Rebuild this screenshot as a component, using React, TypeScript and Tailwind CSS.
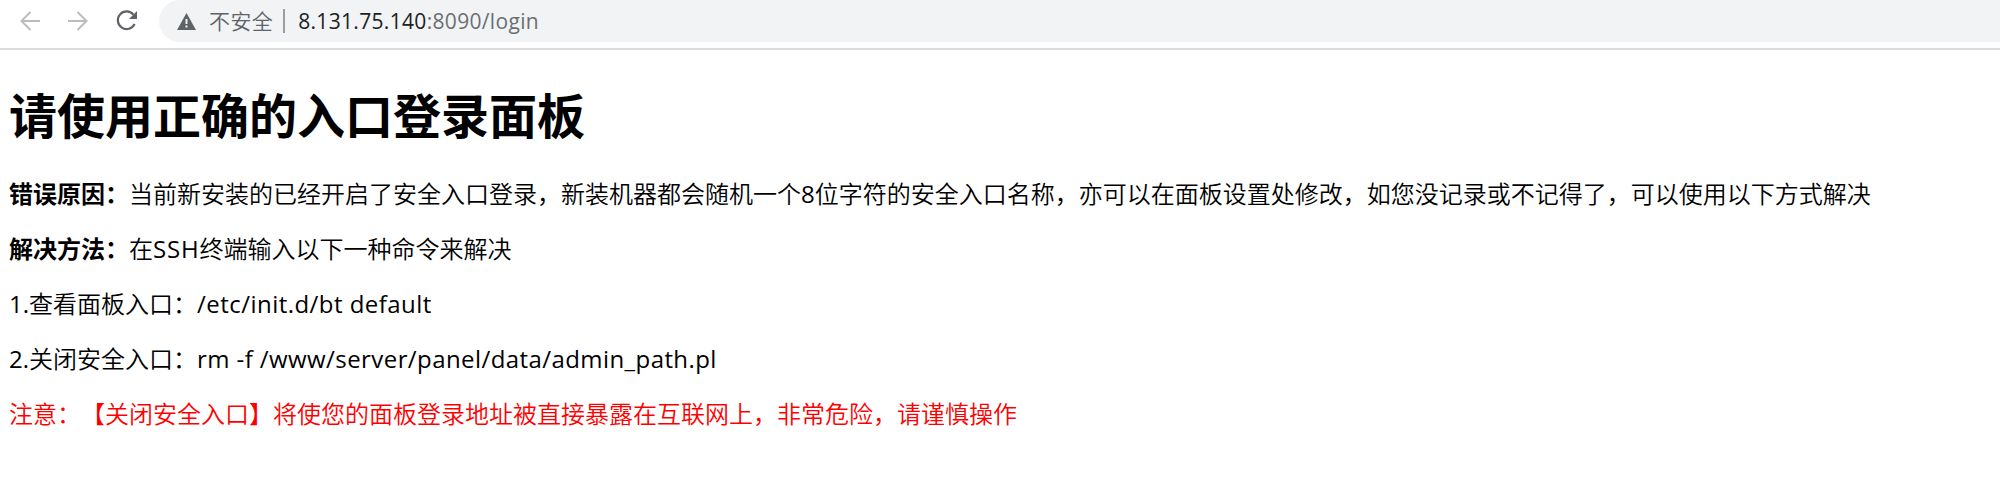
import type { ReactNode } from "react";

function Latin({ children, className = "tracking-[0.42px]" }: { children: ReactNode; className?: string }) {
  return <span className={`font-['Open_Sans','Noto_Sans',sans-serif] font-normal ${className}`}>{children}</span>;
}

function Toolbar() {
  return (
    <header className="flex h-[50px] items-start border-b-2 border-[#dcdcdc] bg-white">
      <div className="flex h-[42px] w-[159px] shrink-0 items-center pl-5">
        <svg className="h-5 w-5 text-[#babcbe]" viewBox="0 0 20 20" fill="none" stroke="currentColor" strokeWidth="2">
          <path d="M20 10H2M10.5 1l-9 9 9 9" />
        </svg>
        <svg className="ml-7 h-5 w-5 text-[#babcbe]" viewBox="0 0 20 20" fill="none" stroke="currentColor" strokeWidth="2">
          <path d="M0 10h18M9.5 1l9 9-9 9" />
        </svg>
        <svg className="ml-7 h-[22px] w-[22px] text-[#5f6368]" viewBox="0 0 22 22" fill="none">
          <path d="M17.4 4.6A8.8 8.8 0 1 0 18.6 14" stroke="currentColor" strokeWidth="2.2" />
          <path d="M21 1v8h-8z" fill="currentColor" />
        </svg>
      </div>
      <div className="flex h-[42px] flex-1 items-center rounded-l-full bg-[#f1f3f4] pl-[18px]">
        <svg className="h-[17px] w-[19px]" viewBox="0 0 19 17">
          <path d="M9.5 0L19 17H0z" fill="#5f6368" />
          <path d="M8.5 6h2v5h-2zM8.5 12.5h2v2h-2z" fill="#f1f3f4" />
        </svg>
        <span className="ml-[13px] -mt-px text-[21px] leading-none font-[350] tracking-[0.4px] text-[#5f6368]">不安全</span>
        <span className="ml-[10px] h-6 w-[2px] bg-[#9a9da1]" />
        <Latin className="ml-[13px] text-[21px] leading-none tracking-[0.32px] text-[#202124]">
          8.131.75.140<span className="text-[#6b6f73]">:8090/login</span>
        </Latin>
      </div>
    </header>
  );
}

export default function App() {
  return (
    <div className="h-[487px] w-full overflow-hidden bg-white font-['Noto_Sans_CJK_SC',sans-serif] text-black [text-spacing-trim:space-all]" lang="zh-CN">
      <Toolbar />
      <main className="flex flex-col whitespace-nowrap pl-[9px] text-2xl">
        <h1 className="mt-[31px] h-16 text-[48px] leading-[64px] font-bold">请使用正确的入口登录面板</h1>
        <div className="mt-[32px] flex flex-col gap-[23px] leading-8 font-[350]">
          <p className="h-8">
            <b className="font-bold">错误原因：</b>当前新安装的已经开启了安全入口登录，新装机器都会随机一个<Latin className="">8</Latin>位字符的安全入口名称，亦可以在面板设置处修改，如您没记录或不记得了，可以使用以下方式解决
          </p>
          <p className="h-8">
            <b className="font-bold">解决方法：</b>在<Latin className="tracking-[0.8px]">SSH</Latin>终端输入以下一种命令来解决
          </p>
          <p className="h-8"><Latin className="">1.</Latin>查看面板入口：<Latin className="tracking-[0.46px]">/etc/init.d/bt default</Latin></p>
          <p className="h-8"><Latin className="">2.</Latin>关闭安全入口：<Latin>rm -f /www/server/panel/data/admin_path.pl</Latin></p>
          <p className="h-8 text-[#ff0000]">注意：【关闭安全入口】将使您的面板登录地址被直接暴露在互联网上，非常危险，请谨慎操作</p>
        </div>
      </main>
    </div>
  );
}
